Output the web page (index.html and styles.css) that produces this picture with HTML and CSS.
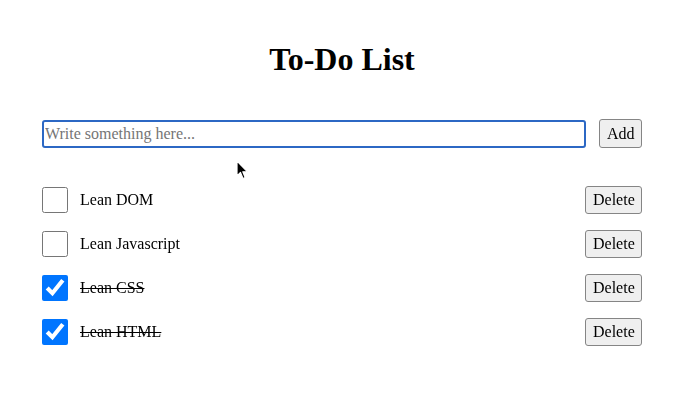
FILE: index.html
```html
<!DOCTYPE html>
<html>
<head>
<meta charset="utf-8">
<link rel="stylesheet" href="styles.css">
</head>
<body>
<main class="app">
  <h1 class="title">To-Do List</h1>
  <form class="add-form">
    <input class="new-item" type="text" placeholder="Write something here..." autofocus>
    <button class="btn add-btn" type="button">Add</button>
  </form>
  <ul class="todo-list">
    <li class="todo">
      <input class="check" type="checkbox">
      <span class="label">Lean DOM</span>
      <button class="btn del-btn" type="button">Delete</button>
    </li>
    <li class="todo">
      <input class="check" type="checkbox">
      <span class="label">Lean Javascript</span>
      <button class="btn del-btn" type="button">Delete</button>
    </li>
    <li class="todo done">
      <input class="check" type="checkbox" checked>
      <span class="label">Lean CSS</span>
      <button class="btn del-btn" type="button">Delete</button>
    </li>
    <li class="todo done">
      <input class="check" type="checkbox" checked>
      <span class="label">Lean HTML</span>
      <button class="btn del-btn" type="button">Delete</button>
    </li>
  </ul>
</main>
<svg class="cursor" width="14" height="20" viewBox="0 0 14 20">
  <path d="M1 1 L1 16 L4.5 12.5 L7 18.5 L9.2 17.6 L6.8 11.8 L11.5 11.8 Z" fill="#000" stroke="#fff" stroke-width="1.2" stroke-linejoin="round"/>
</svg>
</body>
</html>
```
FILE: styles.css
```css
html, body {
  margin: 0;
  padding: 0;
  background: #fff;
}
body {
  font-family: "Liberation Serif", "Times New Roman", serif;
  color: #000;
  position: relative;
  width: 690px;
  height: 416px;
  overflow: hidden;
}
.app {
  width: 600px;
  margin-left: 42px;
  display: flex;
  flex-direction: column;
}
.title {
  margin: 41px 0 0;
  font-size: 32px;
  line-height: 37px;
  font-weight: bold;
  text-align: center;
}
.add-form {
  margin-top: 41px;
  display: flex;
  align-items: center;
  gap: 13px;
}
.new-item {
  flex: 1;
  box-sizing: border-box;
  height: 28px;
  margin: 0;
  padding: 0 2px 0 1px;
  border: 2px solid #2c68c4;
  border-radius: 3px;
  font-family: inherit;
  font-size: 16px;
  outline: none;
  caret-color: #000;
}
.new-item::placeholder {
  color: #757575;
}
.btn {
  box-sizing: border-box;
  height: 28px;
  margin: 0;
  padding: 0 7px;
  background: #efefef;
  border: 1px solid #858585;
  border-radius: 3px;
  font-family: inherit;
  font-size: 16px;
  color: #000;
}
.add-btn {
  width: 43px;
  height: 29px;
}
.del-btn {
  width: 57px;
  margin-left: auto;
}
.todo-list {
  list-style: none;
  margin: 38px 0 0;
  padding: 0;
  display: flex;
  flex-direction: column;
  gap: 16px;
}
.todo {
  display: flex;
  align-items: center;
  height: 28px;
  font-size: 16px;
}
.check {
  width: 26px;
  height: 26px;
  margin: 0 12px 0 0;
  accent-color: #0075ff;
}
.done .label {
  text-decoration: line-through;
}
.cursor {
  position: absolute;
  left: 236px;
  top: 160px;
}
```
